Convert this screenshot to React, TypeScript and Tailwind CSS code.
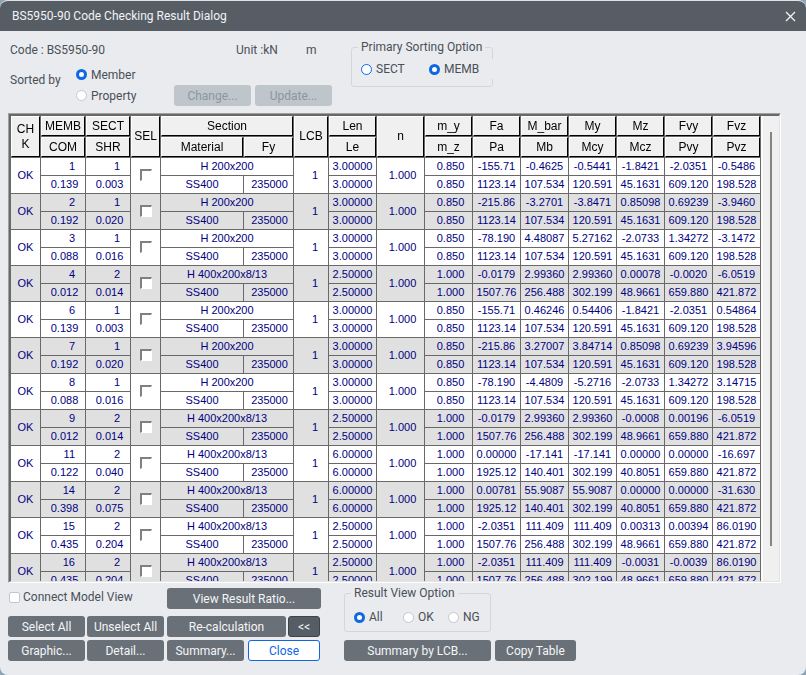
import React from 'react';
import clsx from 'clsx';

type Result = {
  memb: number;
  sect: number;
  com: string;
  shr: string;
  section: string;
  len: string;
  m: string;
  forces: string[];
  capacities: string[];
};

const H200 = 'H 200x200';
const H400 = 'H 400x200x8/13';
const CAP200 = ['1123.14', '107.534', '120.591', '45.1631', '609.120', '198.528'];
const CAP400 = ['1507.76', '256.488', '302.199', '48.9661', '659.880', '421.872'];
const CAP400_LONG = ['1925.12', '140.401', '302.199', '40.8051', '659.880', '421.872'];

const results: Result[] = [
  { memb: 1, sect: 1, com: '0.139', shr: '0.003', section: H200, len: '3.00000', m: '0.850', forces: ['-155.71', '-0.4625', '-0.5441', '-1.8421', '-2.0351', '-0.5486'], capacities: CAP200 },
  { memb: 2, sect: 1, com: '0.192', shr: '0.020', section: H200, len: '3.00000', m: '0.850', forces: ['-215.86', '-3.2701', '-3.8471', '0.85098', '0.69239', '-3.9460'], capacities: CAP200 },
  { memb: 3, sect: 1, com: '0.088', shr: '0.016', section: H200, len: '3.00000', m: '0.850', forces: ['-78.190', '4.48087', '5.27162', '-2.0733', '1.34272', '-3.1472'], capacities: CAP200 },
  { memb: 4, sect: 2, com: '0.012', shr: '0.014', section: H400, len: '2.50000', m: '1.000', forces: ['-0.0179', '2.99360', '2.99360', '0.00078', '-0.0020', '-6.0519'], capacities: CAP400 },
  { memb: 6, sect: 1, com: '0.139', shr: '0.003', section: H200, len: '3.00000', m: '0.850', forces: ['-155.71', '0.46246', '0.54406', '-1.8421', '-2.0351', '0.54864'], capacities: CAP200 },
  { memb: 7, sect: 1, com: '0.192', shr: '0.020', section: H200, len: '3.00000', m: '0.850', forces: ['-215.86', '3.27007', '3.84714', '0.85098', '0.69239', '3.94596'], capacities: CAP200 },
  { memb: 8, sect: 1, com: '0.088', shr: '0.016', section: H200, len: '3.00000', m: '0.850', forces: ['-78.190', '-4.4809', '-5.2716', '-2.0733', '1.34272', '3.14715'], capacities: CAP200 },
  { memb: 9, sect: 2, com: '0.012', shr: '0.014', section: H400, len: '2.50000', m: '1.000', forces: ['-0.0179', '2.99360', '2.99360', '-0.0008', '0.00196', '-6.0519'], capacities: CAP400 },
  { memb: 11, sect: 2, com: '0.122', shr: '0.040', section: H400, len: '6.00000', m: '1.000', forces: ['0.00000', '-17.141', '-17.141', '0.00000', '0.00000', '-16.697'], capacities: CAP400_LONG },
  { memb: 14, sect: 2, com: '0.398', shr: '0.075', section: H400, len: '6.00000', m: '1.000', forces: ['0.00781', '55.9087', '55.9087', '0.00000', '0.00000', '-31.630'], capacities: CAP400_LONG },
  { memb: 15, sect: 2, com: '0.435', shr: '0.204', section: H400, len: '2.50000', m: '1.000', forces: ['-2.0351', '111.409', '111.409', '0.00313', '0.00394', '86.0190'], capacities: CAP400 },
  { memb: 16, sect: 2, com: '0.435', shr: '0.204', section: H400, len: '2.50000', m: '1.000', forces: ['-2.0351', '111.409', '111.409', '-0.0031', '-0.0039', '86.0190'], capacities: CAP400 },
];

function Button({ className, ...props }: React.ComponentProps<'button'>) {
  return (
    <button
      type="button"
      className={clsx('h-[21px] rounded-[3px] text-center whitespace-nowrap', className)}
      {...props}
    />
  );
}

const solid = 'bg-[#697077] text-[#f4f5f7]';
const muted = 'bg-[#bec5cb] text-[#8d959d]';

function Radio({ name, label, checked, accent, className }: { name: string; label: string; checked?: boolean; accent?: boolean; className?: string }) {
  return (
    <label className={clsx('flex items-center gap-1', className)}>
      <input
        type="radio"
        name={name}
        defaultChecked={checked}
        className={clsx(
          'size-[11px] shrink-0 appearance-none rounded-full border bg-white checked:border-[3px] checked:border-[#0f67e6]',
          accent ? 'border-[#0f67e6]' : 'border-[#c3c7cc]'
        )}
      />
      {label}
    </label>
  );
}

function Th({ children, ...props }: React.ComponentProps<'th'>) {
  return (
    <th className="h-[21px] border-r border-b border-[#696969] p-0 font-normal" {...props}>
      <div className="flex h-full items-center justify-center border-t border-l border-r border-b border-t-white border-l-white border-r-black border-b-black bg-[#f0f0f0]">
        {children}
      </div>
    </th>
  );
}

function Td({ className, ...props }: React.ComponentProps<'td'>) {
  return <td className={clsx('h-[18px] border-r border-b border-[#696969] p-0 pb-px', className)} {...props} />;
}

function ResultRows({ row }: { row: Result }) {
  return (
    <tbody className="bg-white even:bg-[#e0e0e0]">
      <tr>
        <Td rowSpan={2}>OK</Td>
        <Td className="pr-[10px] text-right">{row.memb}</Td>
        <Td className="pr-[10px] text-right">{row.sect}</Td>
        <Td rowSpan={2}>
          <input
            type="checkbox"
            aria-label={`Select member ${row.memb}`}
            className="mx-auto block size-3 appearance-none border-t-2 border-l-2 border-r border-b border-t-[#808080] border-l-[#808080] border-r-white border-b-white bg-white checked:bg-[#000080]"
          />
        </Td>
        <Td colSpan={2}>{row.section}</Td>
        <Td rowSpan={2} className="pr-[10px] text-right">1</Td>
        <Td>{row.len}</Td>
        <Td rowSpan={2} className="pl-1">1.000</Td>
        <Td className="pl-1">{row.m}</Td>
        {row.forces.map((v, i) => <Td key={i}>{v}</Td>)}
      </tr>
      <tr>
        <Td className="pl-[3px]">{row.com}</Td>
        <Td className="pl-[3px]">{row.shr}</Td>
        <Td>SS400</Td>
        <Td className="pl-[2px]">235000</Td>
        <Td>{row.len}</Td>
        <Td className="pl-1">{row.m}</Td>
        {row.capacities.map((v, i) => <Td key={i}>{v}</Td>)}
      </tr>
    </tbody>
  );
}

function ResultTable() {
  return (
    <table className="w-full table-fixed border-separate border-spacing-0 text-center font-['Liberation_Sans',Arial,sans-serif] text-[11px] leading-3 text-[#000080]">
      <colgroup>
        <col className="w-[30px]" />
        <col className="w-[45px]" />
        <col className="w-[45px]" />
        <col className="w-[30px]" />
        <col className="w-[83px]" />
        <col className="w-[50px]" />
        <col className="w-[35px]" />
        <col span={9} className="w-[48px]" />
      </colgroup>
      <thead className="sticky top-0 z-10 text-xs leading-[15px] text-black">
        <tr className="h-[21px]">
          <Th rowSpan={2}>CH<br />K</Th>
          <Th>MEMB</Th>
          <Th>SECT</Th>
          <Th rowSpan={2}>SEL</Th>
          <Th colSpan={2}>Section</Th>
          <Th rowSpan={2}>LCB</Th>
          <Th>Len</Th>
          <Th rowSpan={2}>n</Th>
          {['m_y', 'Fa', 'M_bar', 'My', 'Mz', 'Fvy', 'Fvz'].map((h) => <Th key={h}>{h}</Th>)}
        </tr>
        <tr className="h-[21px]">
          {['COM', 'SHR', 'Material', 'Fy', 'Le', 'm_z', 'Pa', 'Mb', 'Mcy', 'Mcz', 'Pvy', 'Pvz'].map((h) => <Th key={h}>{h}</Th>)}
        </tr>
      </thead>
      {results.map((row) => <ResultRows key={row.memb} row={row} />)}
    </table>
  );
}

export default function App() {
  return (
    <div className="h-screen bg-[#8fa3b3]">
      <div className="flex h-full flex-col overflow-hidden rounded-lg border-t border-[#dfe3e7] bg-[#e9ebef] font-[Roboto,sans-serif] text-xs leading-4 text-[#4a5057]">
        <header className="flex h-[30px] shrink-0 items-center justify-between bg-[#565d65] pr-[10px] pl-3 text-[#f1f3f5]">
          <h1>BS5950-90 Code Checking Result Dialog</h1>
          <button type="button" aria-label="Close dialog">
            <svg viewBox="0 0 11 11" className="size-[11px]" fill="none" stroke="currentColor" strokeWidth="1.3">
              <path d="M1 1l9 9M10 1l-9 9" />
            </svg>
          </button>
        </header>

        <section className="flex shrink-0 gap-[19px] pb-[7px] pl-2">
          <div className="w-[324px]">
            <div className="flex h-[33px] items-center pt-[5px] pl-[2px]">
              <span className="w-[226px]">Code : BS5950-90</span>
              <span className="w-[70px]">Unit :kN</span>
              <span>m</span>
            </div>
            <div className="flex pl-[2px]">
              <span className="w-[66px] leading-8">Sorted by</span>
              <div className="flex-1">
                <Radio name="sorted-by" label="Member" checked className="h-[21px]" />
                <Radio name="sorted-by" label="Property" className="h-[21px]" />
              </div>
              <div className="flex gap-1 self-end">
                <Button disabled className={clsx(muted, 'w-[77px]')}>Change...</Button>
                <Button disabled className={clsx(muted, 'w-[77px]')}>Update...</Button>
              </div>
            </div>
          </div>
          <fieldset className="mt-2 w-[142px] self-start rounded-[3px] border border-[#d3d6da] pb-[7px] pl-[9px]">
            <legend className="-ml-[3px] px-[3px] whitespace-nowrap">Primary Sorting Option</legend>
            <div className="mt-1 flex">
              <Radio name="primary-sort" label="SECT" accent className="h-5 w-[68px]" />
              <Radio name="primary-sort" label="MEMB" checked className="-mr-px h-5 flex-1 bg-[#e9ebef]" />
            </div>
          </fieldset>
        </section>

        <main className="mr-[25px] ml-2 flex min-h-0 flex-1 border border-t-[#a0a0a0] border-r-white border-b-white border-l-[#a0a0a0]">
          <div className="flex min-w-0 flex-1 border-t-2 border-r border-b border-l-2 border-t-[#696969] border-r-[#e3e3e3] border-b-[#e3e3e3] border-l-[#696969]">
            <div className="min-w-0 flex-1 overflow-y-auto [scrollbar-width:none]">
              <ResultTable />
            </div>
            <div className="flex w-[18px] justify-center border-l-2 border-[#fafafa] bg-[#f0f0f0] pt-4 pb-[35px]">
              <div className="w-[2px] bg-[#858585]" />
            </div>
          </div>
        </main>

        <footer className="flex shrink-0 items-end gap-[23px] pb-[14px] pl-2">
          <div className="flex w-[313px] flex-col gap-[3px] pt-[5px]">
            <div className="mb-1 flex items-center justify-between">
              <label className="flex items-center gap-[3px] pl-px pb-[3px]">
                <input type="checkbox" className="size-[11px] appearance-none rounded-[2px] border border-[#c3c7cc] bg-white checked:bg-[#0f67e6]" />
                Connect Model View
              </label>
              <Button className={clsx(solid, 'w-[154px]')}>View Result Ratio...</Button>
            </div>
            <div className="flex gap-[3px]">
              <div className="grid grid-cols-[77px_77px] gap-x-[2px] gap-y-[3px]">
                <Button className={solid}>Select All</Button>
                <Button className={solid}>Unselect All</Button>
                <Button className={solid}>Graphic...</Button>
                <Button className={solid}>Detail...</Button>
              </div>
              <div className="flex flex-col gap-[3px]">
                <div className="flex gap-[2px]">
                  <Button className={clsx(solid, 'w-[119px]')}>Re-calculation</Button>
                  <Button className="w-8 border border-[#3d444b] bg-[#565d65] text-[#f4f5f7]">&lt;&lt;</Button>
                </div>
                <div className="flex gap-1">
                  <Button className={clsx(solid, 'w-[77px]')}>Summary...</Button>
                  <Button className="w-[72px] border border-[#0f67e6] bg-white text-[#0f67e6]">Close</Button>
                </div>
              </div>
            </div>
          </div>
          <div className="flex flex-col gap-2">
            <fieldset className="w-[147px] rounded-[3px] border border-[#d3d6da] pb-1 pl-[9px]">
              <legend className="-ml-[3px] px-[3px] whitespace-nowrap">Result View Option</legend>
              <div className="mt-[6px] flex h-5 items-center">
                <Radio name="result-view" label="All" checked className="w-[49px]" />
                <Radio name="result-view" label="OK" className="w-[45px]" />
                <Radio name="result-view" label="NG" />
              </div>
            </fieldset>
            <div className="flex gap-1">
              <Button className={clsx(solid, 'w-[147px]')}>Summary by LCB...</Button>
              <Button className={clsx(solid, 'w-[81px]')}>Copy Table</Button>
            </div>
          </div>
        </footer>
      </div>
    </div>
  );
}
